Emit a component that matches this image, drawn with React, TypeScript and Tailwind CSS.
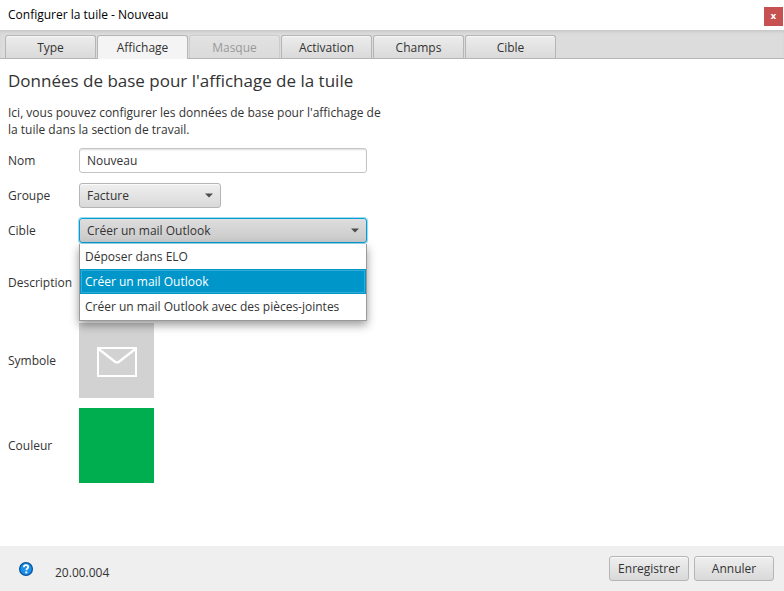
import * as React from 'react';
import { clsx } from 'clsx';

const tabs = [
  { id: 'type', label: 'Type' },
  { id: 'affichage', label: 'Affichage' },
  { id: 'masque', label: 'Masque', disabled: true },
  { id: 'activation', label: 'Activation' },
  { id: 'champs', label: 'Champs' },
  { id: 'cible', label: 'Cible' },
];

const targets = [
  'Déposer dans ELO',
  'Créer un mail Outlook',
  'Créer un mail Outlook avec des pièces-jointes',
];

const Arrow = () => (
  <svg
    className="pointer-events-none absolute top-0 right-2 h-full w-2"
    viewBox="0 0 8 4"
    fill="#4c4c4c"
    aria-hidden="true"
  >
    <path d="M0 0h8L4 4z" />
  </svg>
);

const HelpIcon = () => (
  <svg className="size-4" viewBox="0 0 16 16" aria-hidden="true">
    <circle cx="8" cy="8" r="6.4" fill="#1c8fec" stroke="#0b559c" strokeWidth="1.3" />
    <path
      d="M5.9 6.3C5.9 4.9 6.8 4.2 8 4.2s2.2.7 2.2 1.9c0 1.5-1.9 1.5-1.9 3.1"
      fill="none"
      stroke="#fff"
      strokeWidth="1.8"
    />
    <path d="M7.3 10.5h2v1.8h-2z" fill="#fff" />
  </svg>
);

const MailIcon = () => (
  <svg className="h-[33px] w-10" viewBox="0 0 40 33" fill="none" stroke="#fff" strokeWidth="2" aria-hidden="true">
    <path d="M1 4h38v28H1z" />
    <path d="M1 4.5l17 13.2q2 1.4 4 0L39 4.5" strokeWidth="2.3" />
  </svg>
);

interface ComboBoxProps {
  id: string;
  value: string;
  options: string[];
  onChange: (value: string) => void;
  defaultOpen?: boolean;
  className?: string;
}

const ComboBox = ({ id, value, options, onChange, defaultOpen = false, className }: ComboBoxProps) => {
  const [open, setOpen] = React.useState(defaultOpen);

  return (
    <div className={clsx('relative', className)}>
      <select
        id={id}
        value={value}
        onChange={(e) => onChange(e.target.value)}
        onMouseDown={(e) => {
          e.preventDefault();
          setOpen(!open);
        }}
        className={clsx(
          'block h-[25px] w-full appearance-none rounded-[3px] border bg-linear-to-b pr-6 pl-[7px] outline-none',
          open
            ? 'border-[#039ed3] from-[#dedede] to-[#c9c9c9] shadow-[0_0_0_1px_#9fdcf0]'
            : 'border-[#b5b5b5] from-[#efefef] to-[#d9d9d9] shadow-[inset_0_1px_0_#fafafa]',
        )}
      >
        {options.map((option) => (
          <option key={option}>{option}</option>
        ))}
      </select>
      <Arrow />
      {open && (
        <ul
          role="listbox"
          aria-label="Choix"
          className="absolute top-full right-0 left-0 z-10 mt-px border border-t-0 border-[#9a9a9a] bg-white pb-px shadow-[0_4px_9px_rgba(0,0,0,0.4)]"
        >
          {options.map((option) => (
            <li
              key={option}
              role="option"
              aria-selected={option === value}
              onClick={() => {
                onChange(option);
                setOpen(false);
              }}
              className={clsx(
                'h-[25px] px-[5px] leading-[25px] whitespace-nowrap',
                option === value && 'bg-[#0096c9] text-white shadow-[inset_0_0_0_1px_#0096c9,inset_0_0_0_2px_#33abd4]',
              )}
            >
              {option}
            </li>
          ))}
        </ul>
      )}
    </div>
  );
};

const footerButton =
  'h-[25px] w-20 rounded-[3px] border border-[#b5b5b5] bg-linear-to-b from-[#efefef] to-[#d9d9d9] shadow-[inset_0_1px_0_#fafafa]';

export default function App() {
  const [activeTab, setActiveTab] = React.useState('affichage');
  const [name, setName] = React.useState('Nouveau');
  const [group, setGroup] = React.useState('Facture');
  const [target, setTarget] = React.useState(targets[1]);

  return (
    <div className="flex min-h-screen flex-col bg-white font-['Open_Sans','Noto_Sans',sans-serif] text-[12px] text-[#333]">
      <header className="flex h-[30px] items-center justify-between pl-2 text-black">
        <h1>Configurer la tuile - Nouveau</h1>
        <button
          type="button"
          aria-label="Fermer"
          className="mt-[3px] mr-px size-[19px] bg-[#c75050] font-['DejaVu_Sans',sans-serif] text-[9px] leading-none font-bold text-white"
        >
          x
        </button>
      </header>

      <nav
        role="tablist"
        className="flex h-[29px] gap-px border-b border-[#b5b5b5] bg-[#dcdcdc] pt-[5px] pl-[5px] shadow-[inset_0_3px_3px_-1px_#c8c8c8]"
      >
        {tabs.map((tab) => (
          <button
            key={tab.id}
            type="button"
            role="tab"
            aria-selected={tab.id === activeTab}
            disabled={tab.disabled}
            onClick={() => setActiveTab(tab.id)}
            className={clsx(
              'w-[91px] rounded-t-[3px] border border-b-0 pt-px',
              tab.id === activeTab
                ? '-mb-px border-[#b5b5b5] bg-[#f4f4f4]'
                : 'border-[#b5b5b5] bg-linear-to-b from-[#ececec] to-[#dadada] shadow-[inset_0_1px_0_#f8f8f8]',
              tab.disabled && 'opacity-40',
            )}
          >
            {tab.label}
          </button>
        ))}
      </nav>

      <main className="flex-1 px-2 pt-2">
        <h2 className="text-[17px] leading-7">Données de base pour l'affichage de la tuile</h2>
        <p className="mt-[9px] leading-[17px]">
          Ici, vous pouvez configurer les données de base pour l'affichage de
          <br />
          la tuile dans la section de travail.
        </p>

        <form className="mt-[10px] grid grid-cols-[71px_minmax(0,288px)] items-center gap-y-[10px]">
          <label htmlFor="name">Nom</label>
          <input
            id="name"
            type="text"
            value={name}
            onChange={(e) => setName(e.target.value)}
            className="h-[25px] rounded-[3px] border border-[#c4c4c4] bg-white px-[7px] shadow-[inset_0_2px_2px_-1px_#ddd] outline-none"
          />

          <label htmlFor="group">Groupe</label>
          <ComboBox id="group" value={group} options={['Facture']} onChange={setGroup} className="w-[142px]" />

          <label htmlFor="target">Cible</label>
          <ComboBox id="target" value={target} options={targets} onChange={setTarget} defaultOpen />

          <label htmlFor="description">Description</label>
          <textarea
            id="description"
            className="h-[60px] resize-none rounded-[3px] border border-[#c4c4c4] bg-white px-[7px] outline-none"
          />

          <span>Symbole</span>
          <button
            type="button"
            aria-label="Choisir un symbole"
            className="flex size-[75px] items-center justify-center bg-[#d2d2d2]"
          >
            <MailIcon />
          </button>

          <span>Couleur</span>
          <button type="button" aria-label="Choisir une couleur" className="size-[75px] bg-[#00ae50]" />
        </form>
      </main>

      <footer className="flex h-[45px] items-center bg-[#efefef] pr-[10px] pl-[18px]">
        <button type="button" aria-label="Aide">
          <HelpIcon />
        </button>
        <span className="mt-2 ml-[21px]">20.00.004</span>
        <div className="ml-auto flex gap-[5px]">
          <button type="button" className={footerButton}>
            Enregistrer
          </button>
          <button type="button" className={footerButton}>
            Annuler
          </button>
        </div>
      </footer>
    </div>
  );
}
